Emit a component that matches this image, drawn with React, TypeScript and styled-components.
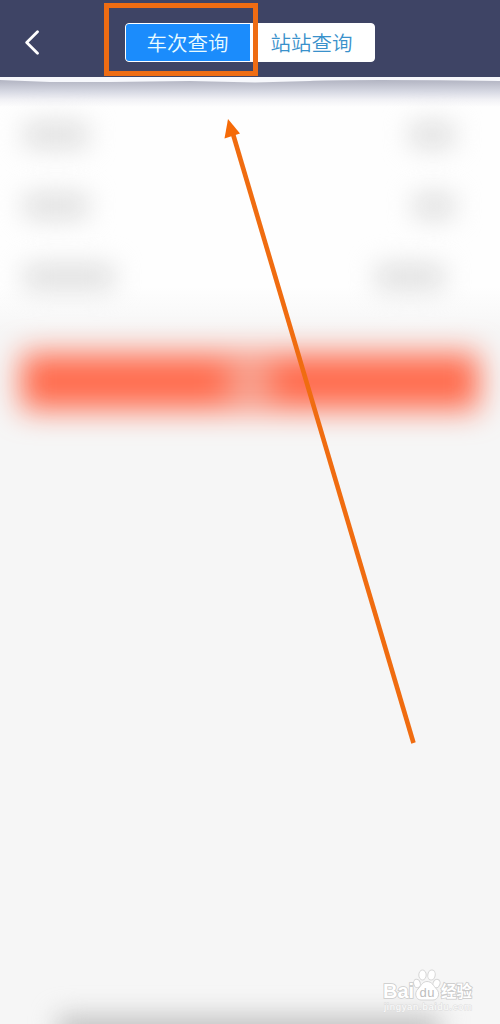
import React from 'react';
import styled, { createGlobalStyle } from 'styled-components';

const GlobalStyle = createGlobalStyle`
  * { box-sizing: border-box; }
  body { margin: 0; background: #f6f6f6; }
`;

const Screen = styled.div`
  position: relative;
  display: flex;
  flex-direction: column;
  width: 500px;
  height: 1024px;
  overflow: hidden;
  background: #f6f6f6;
  font-family: 'Noto Sans CJK SC', sans-serif;
`;

const Header = styled.header`
  display: flex;
  align-items: center;
  flex: none;
  height: 77px;
  padding: 8px 0 0 24px;
  background: #3e4465;
`;

const BackButton = styled.button`
  display: flex;
  width: 16px;
  height: 26px;
  margin-right: 85px;
  padding: 0;
  border: 0;
  background: none;
`;

const Tabs = styled.nav`
  display: flex;
  width: 250px;
  height: 39px;
  border: 1px solid #fff;
  border-radius: 4px;
  overflow: hidden;
  background: #fff;
`;

const Tab = styled.button<{ $active?: boolean }>`
  flex: 1;
  padding: 0 1px 0 0;
  border: 0;
  font-family: inherit;
  font-size: 20.5px;
  font-weight: 350;
  line-height: 37px;
  color: ${(p) => (p.$active ? '#e9fbff' : '#3a91cb')};
  background: ${(p) => (p.$active ? '#1b8cfc' : '#fff')};
`;

const Edge = styled.svg`
  display: block;
  flex: none;
`;

const Form = styled.section`
  display: flex;
  flex-direction: column;
  flex: none;
  height: 225px;
  padding: 0 45px 0 23px;
  background: linear-gradient(#fefefe 0, #fefefe 180px, #f6f6f6 100%);
`;

const Row = styled.div`
  display: flex;
  align-items: center;
  justify-content: space-between;
  height: 71px;

  &:first-child { margin-top: -8px; }
`;

const Smudge = styled.div<{ $width: number; $shift?: number }>`
  width: ${(p) => p.$width}px;
  height: 26px;
  margin-right: ${(p) => p.$shift ?? 0}px;
  border-radius: 8px;
  background: #dfdfdf;
  filter: blur(13px);
`;

const SubmitButton = styled.div`
  display: flex;
  flex: none;
  justify-content: center;
  align-items: center;
  height: 57px;
  margin: 21px 21px 0;
  background: #ff6c4e;
  filter: blur(15px);
`;

const SubmitLabel = styled.div`
  width: 44px;
  height: 36px;
  background: #f6ab9b;
  filter: blur(5px);
`;

const BottomShade = styled.div`
  flex: none;
  height: 30px;
  margin: auto 60px -22px 58px;
  background: #c0c0c0;
  filter: blur(13px);
`;

const Highlight = styled.div`
  position: absolute;
  left: 104px;
  top: 3px;
  width: 154px;
  height: 73px;
  border: 5px solid #ee6c13;
`;

const Arrow = styled.svg`
  position: absolute;
  left: 0;
  top: 0;
  pointer-events: none;
`;

const Watermark = styled.div`
  position: absolute;
  left: 383px;
  top: 968px;
  width: 100px;
  height: 46px;
`;

export default function App() {
  return (
    <Screen>
      <GlobalStyle />
      <Header>
        <BackButton aria-label="返回">
          <svg width="16" height="26" viewBox="0 0 16 26" fill="none" stroke="#fff" strokeWidth="2.8" strokeLinecap="round" strokeLinejoin="round">
            <path d="M13.5 1.8 2.7 12.5l10.8 10.8" />
          </svg>
        </BackButton>
        <Tabs>
          <Tab $active>车次查询</Tab>
          <Tab>站站查询</Tab>
        </Tabs>
      </Header>
      <Edge width="500" height="30" viewBox="0 0 500 30">
        <defs>
          <linearGradient id="shade" x1="0" y1="0" x2="0" y2="1">
            <stop offset="0" stopColor="#acaebc" />
            <stop offset=".2" stopColor="#bbbdca" />
            <stop offset=".5" stopColor="#d8dae4" />
            <stop offset=".75" stopColor="#f1f1f5" />
            <stop offset="1" stopColor="#fefefe" />
          </linearGradient>
        </defs>
        <path fill="url(#shade)" d="M0 0h500v30H0z" />
        <path fill="#f7f8fc" d="M0 0h500v4Q440 3 380 3T310 4L255 5.500 190 4 110 5 50 5 0 3z" />
      </Edge>
      <Form>
        <Row><Smudge $width={66} /><Smudge $width={46} /></Row>
        <Row><Smudge $width={66} /><Smudge $width={42} /></Row>
        <Row><Smudge $width={92} /><Smudge $width={70} $shift={10} /></Row>
      </Form>
      <SubmitButton><SubmitLabel /></SubmitButton>
      <BottomShade />
      <Highlight />
      <Arrow width="500" height="1024" viewBox="0 0 500 1024">
        <path d="M233 134 413.500 743" fill="none" stroke="#f06c10" strokeWidth="4.600" />
        <path d="M228 119 240 133.500 224.500 138.500z" fill="#f56a08" />
      </Arrow>
      <Watermark>
        <svg width="100" height="46" viewBox="0 0 100 46">
          <g fill="#fff" stroke="#d6d6d6" strokeWidth="1">
            <ellipse cx="34" cy="15.500" rx="3.300" ry="4.300" transform="rotate(-15 34 15.500)" />
            <ellipse cx="39.500" cy="7" rx="3.700" ry="5" />
            <ellipse cx="48.500" cy="7" rx="3.700" ry="5" transform="rotate(10 48.500 7)" />
            <ellipse cx="53.500" cy="15.500" rx="3.500" ry="4.300" transform="rotate(20 53.500 15.500)" />
            <path d="M44 13.500c-5 0-6 5-9 7.500-4 3.500-2.500 11 3 11h12c5.500 0 7.500-7 3.500-11-3-3-4.500-7.500-9.500-7.500z" />
          </g>
          <g fill="#fff" stroke="#cacaca" strokeWidth="1.600" paintOrder="stroke">
            <text x="0" y="30" fontFamily="Liberation Sans, sans-serif" fontWeight="700" fontSize="20" textLength="31">Bai</text>
            <text x="58" y="29" fontFamily="Noto Sans CJK SC, sans-serif" fontWeight="700" fontSize="15.500" textLength="31">经验</text>
          </g>
          <text x="36.500" y="28.500" fontFamily="Liberation Sans, sans-serif" fontSize="13" fill="#bdbdbd" textLength="15">du</text>
          <text x="1" y="42" fontFamily="Liberation Sans, sans-serif" fontSize="9.500" fill="#fcfcfc" stroke="#dcdcdc" strokeWidth="1" paintOrder="stroke" textLength="88">jingyan.baidu.com</text>
        </svg>
      </Watermark>
    </Screen>
  );
}
